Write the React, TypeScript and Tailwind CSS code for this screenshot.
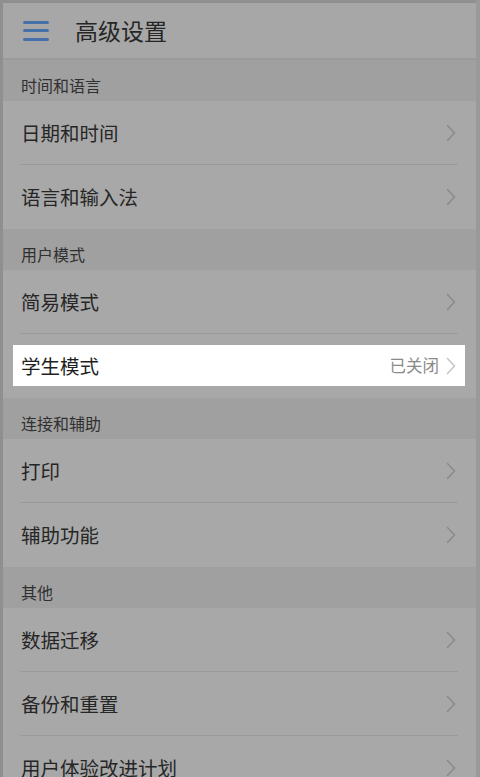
type Row = { label: string; value?: string; highlight?: boolean };
type Section = { title: string; rows: Row[] };

const sections: Section[] = [
  {
    title: "时间和语言",
    rows: [{ label: "日期和时间" }, { label: "语言和输入法" }],
  },
  {
    title: "用户模式",
    rows: [{ label: "简易模式" }, { label: "学生模式", value: "已关闭", highlight: true }],
  },
  {
    title: "连接和辅助",
    rows: [{ label: "打印" }, { label: "辅助功能" }],
  },
  {
    title: "其他",
    rows: [{ label: "数据迁移" }, { label: "备份和重置" }, { label: "用户体验改进计划" }],
  },
];

function Chevron({ light }: { light?: boolean }) {
  return (
    <svg width="10" height="18" viewBox="0 0 10 18" fill="none" className="shrink-0">
      <path
        d="M1.5 1.5 L8.5 9 L1.5 16.5"
        stroke={light ? "#c4c4c4" : "#8a8a8a"}
        strokeWidth="1.5"
        strokeLinecap="round"
        strokeLinejoin="round"
      />
    </svg>
  );
}

function SettingRow({ row, last }: { row: Row; last: boolean }) {
  return (
    <div className="relative h-[64px] bg-[#a8a8a8]">
      {row.highlight ? (
        <div className="absolute left-[10px] right-[11px] top-[11px] bottom-[12px] flex items-center bg-white pl-[8px] pr-[9px]">
          <span className="flex-1 text-[19.5px] text-[#1f1f1f]">{row.label}</span>
          {row.value && (
            <span className="mr-[7px] text-[16.5px] text-[#8a8a8a]">{row.value}</span>
          )}
          <Chevron light />
        </div>
      ) : (
        <div className="flex h-full items-center pl-[18px] pr-[20px]">
          <span className="flex-1 text-[19.5px] text-[#262626]">{row.label}</span>
          <Chevron />
        </div>
      )}
      {!last && (
        <div className="absolute bottom-0 left-[17px] right-[18px] h-px bg-[#9a9a9a]" />
      )}
    </div>
  );
}

export default function App() {
  return (
    <div
      className="h-[777px] w-[480px] overflow-hidden bg-[#999999]"
      style={{ fontFamily: '"Noto Sans CJK SC", "Noto Sans", sans-serif' }}
    >
      <div className="mr-[4px] h-full border-l-[3px] border-t-[3px] border-[#8f8f8f] bg-[#a8a8a8]">
        <header className="flex h-[57px] items-center border-b-2 border-[#9a9a9a] bg-[#a7a7a7]">
          <div className="ml-[20px] flex w-[26px] flex-col gap-[5.5px]">
            <span className="h-[3px] rounded-full bg-[#4670aa]" />
            <span className="h-[3px] rounded-full bg-[#4670aa]" />
            <span className="h-[3px] rounded-full bg-[#4670aa]" />
          </div>
          <h1 className="ml-[26px] text-[23px] text-[#262626]">高级设置</h1>
        </header>
        {sections.map((s) => (
          <section key={s.title}>
            <div className="flex h-[41px] items-center bg-[#a0a0a0] pl-[18px] pt-[8px] text-[16px] text-[#303030]">
              {s.title}
            </div>
            {s.rows.map((r, i) => (
              <SettingRow key={r.label} row={r} last={i === s.rows.length - 1} />
            ))}
          </section>
        ))}
      </div>
    </div>
  );
}
